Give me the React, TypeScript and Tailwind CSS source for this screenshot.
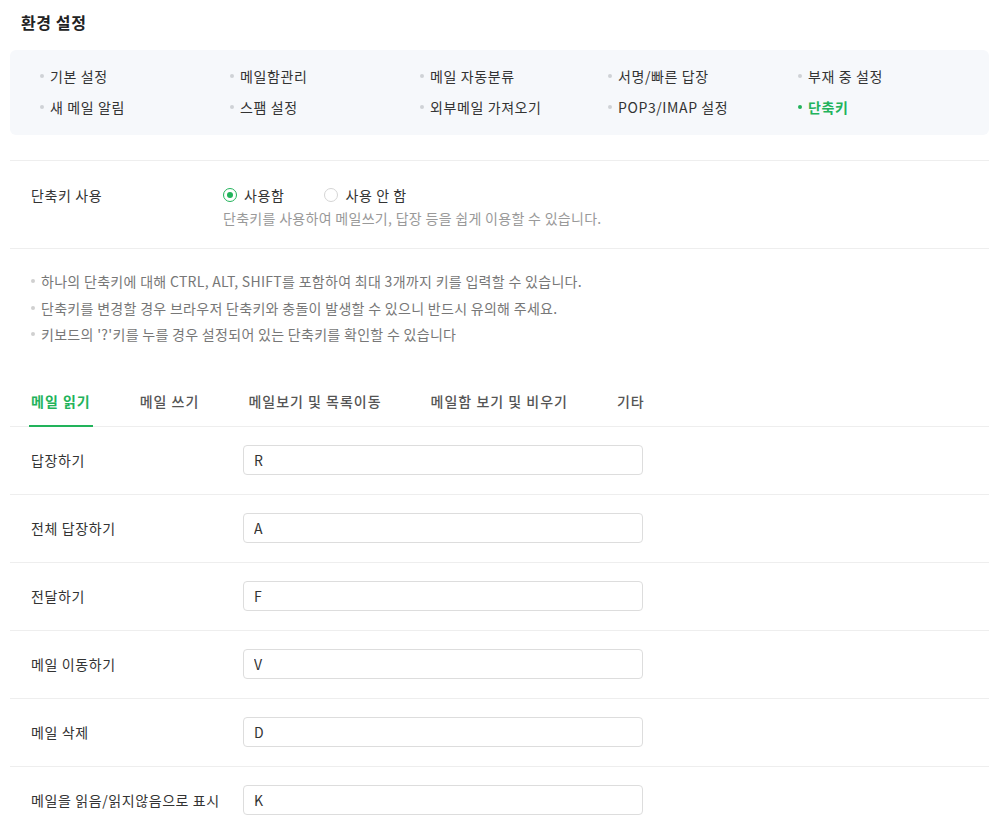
import { useState } from 'react'

const FONT = { fontFamily: '"Noto Sans CJK KR", "Noto Sans", sans-serif' }

const MENU_ROWS: string[][] = [
  ['기본 설정', '메일함관리', '메일 자동분류', '서명/빠른 답장', '부재 중 설정'],
  ['새 메일 알림', '스팸 설정', '외부메일 가져오기', 'POP3/IMAP 설정', '단축키'],
]

const NOTES = [
  '하나의 단축키에 대해 CTRL, ALT, SHIFT를 포함하여 최대 3개까지 키를 입력할 수 있습니다.',
  '단축키를 변경할 경우 브라우저 단축키와 충돌이 발생할 수 있으니 반드시 유의해 주세요.',
  "키보드의 '?'키를 누를 경우 설정되어 있는 단축키를 확인할 수 있습니다",
]

const TABS = ['메일 읽기', '메일 쓰기', '메일보기 및 목록이동', '메일함 보기 및 비우기', '기타']

const SHORTCUTS: Array<{ label: string; key: string }> = [
  { label: '답장하기', key: 'R' },
  { label: '전체 답장하기', key: 'A' },
  { label: '전달하기', key: 'F' },
  { label: '메일 이동하기', key: 'V' },
  { label: '메일 삭제', key: 'D' },
  { label: '메일을 읽음/읽지않음으로 표시', key: 'K' },
]

function Radio({ checked, label, onClick }: { checked: boolean; label: string; onClick: () => void }) {
  return (
    <button type="button" onClick={onClick} className="flex items-center gap-[7px] text-[14px] text-[#333]">
      <span
        className={`flex h-[14px] w-[14px] items-center justify-center rounded-full border ${
          checked ? 'border-[#22b35b]' : 'border-[#d5d5d5]'
        }`}
      >
        {checked ? <span className="h-[6px] w-[6px] rounded-full bg-[#22b35b]" /> : null}
      </span>
      {label}
    </button>
  )
}

export default function App() {
  const [enabled, setEnabled] = useState(true)
  const [activeTab, setActiveTab] = useState(0)
  const [keys, setKeys] = useState(SHORTCUTS.map((item) => item.key))

  return (
    <div style={FONT} className="min-h-screen bg-white pl-[10px] pr-[16px] tracking-[0.6px] text-[#333]">
      <h1 className="pl-[11px] pt-[11px] pb-[17px] text-[16px] font-bold leading-[22px] text-[#222]">환경 설정</h1>

      <div className="rounded-[6px] bg-[#f6f8fb] pl-[30px] pt-[16px] pb-[18px]">
        {MENU_ROWS.map((row, rowIndex) => (
          <div key={rowIndex} className={`grid grid-cols-[190px_190px_188px_190px_190px] ${rowIndex ? 'mt-[11px]' : ''}`}>
            {row.map((item) => {
              const active = item === '단축키'
              return (
                <div
                  key={item}
                  className={`flex items-center gap-[6px] text-[14px] leading-[20px] ${
                    active ? 'font-bold text-[#22b35b]' : 'text-[#333]'
                  }`}
                >
                  <span className={`h-[4px] w-[4px] rounded-full ${active ? 'bg-[#22b35b]' : 'bg-[#cfd2d6]'}`} />
                  {item}
                </div>
              )
            })}
          </div>
        ))}
      </div>

      <div className="mt-[25px] border-t border-[#eeeeee] pl-[21px] pt-[24px] pb-[20px]">
        <div className="flex">
          <div className="w-[192px] text-[14px] leading-[20px]">단축키 사용</div>
          <div>
            <div className="flex h-[20px] items-center gap-[40px]">
              <Radio checked={enabled} label="사용함" onClick={() => setEnabled(true)} />
              <Radio checked={!enabled} label="사용 안 함" onClick={() => setEnabled(false)} />
            </div>
            <p className="mt-[4px] text-[14px] leading-[19px] tracking-[0.3px] text-[#999]">
              단축키를 사용하여 메일쓰기, 답장 등을 쉽게 이용할 수 있습니다.
            </p>
          </div>
        </div>
      </div>

      <ul className="border-t border-[#eeeeee] pl-[21px] pt-[19px]">
        {NOTES.map((note) => (
          <li key={note} className="flex items-center gap-[6px] text-[14px] leading-[26.5px] tracking-[0.3px] text-[#777]">
            <span className="h-[4px] w-[4px] rounded-full bg-[#d0d0d0]" />
            {note}
          </li>
        ))}
      </ul>

      <div className="mt-[29px] flex gap-[45px] border-b border-[#eeeeee] pl-[19px]">
        {TABS.map((tab, index) => (
          <button
            key={tab}
            type="button"
            onClick={() => setActiveTab(index)}
            className={`-mb-px flex h-[50px] items-center border-b-2 px-[2px] pt-[2px] text-[14px] tracking-[1px] ${
              activeTab === index ? 'border-[#22b35b] font-bold text-[#22b35b]' : 'border-transparent font-medium text-[#555]'
            }`}
          >
            {tab}
          </button>
        ))}
      </div>

      {SHORTCUTS.map((item, index) => (
        <div key={item.label} className="flex h-[68px] items-center border-b border-[#eeeeee] pl-[21px]">
          <div className="w-[212px] text-[14px] text-[#333]">{item.label}</div>
          <input
            type="text"
            value={keys[index]}
            onChange={(event) => {
              const next = [...keys]
              next[index] = event.target.value
              setKeys(next)
            }}
            className="h-[30px] w-[400px] rounded-[4px] border border-[#dddddd] px-[10px] text-[14px] text-[#333] outline-none"
          />
        </div>
      ))}
    </div>
  )
}
